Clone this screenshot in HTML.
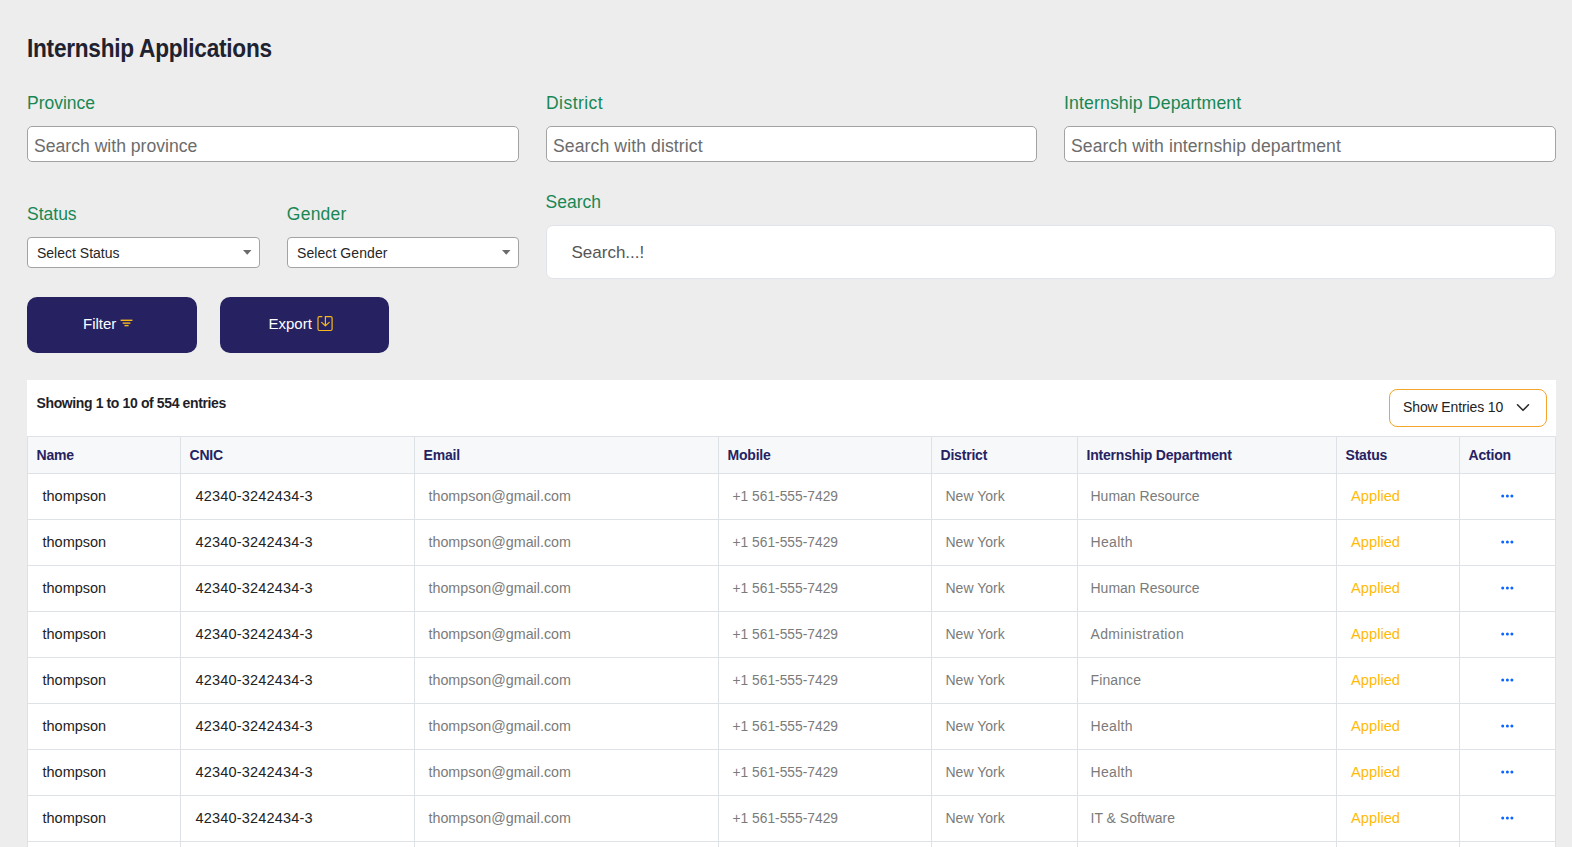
<!DOCTYPE html>
<html><head><meta charset="utf-8"><style>
html,body{margin:0;padding:0;}
body{width:1572px;height:847px;overflow:hidden;background:#ededed;position:relative;font-family:"Liberation Sans",sans-serif;}
.t{position:absolute;white-space:nowrap;line-height:1;}
.abs{position:absolute;box-sizing:border-box;}
.inp{position:absolute;box-sizing:border-box;background:#fff;border:1px solid #a3a3a3;border-radius:5px;}
.sel{position:absolute;box-sizing:border-box;background:#fff;border:1px solid #a3a3a3;border-radius:4px;}
.sbox{position:absolute;box-sizing:border-box;background:#fff;border:1px solid #e0e4ea;border-radius:7px;}
.btn{position:absolute;box-sizing:border-box;background:#262262;border-radius:10px;}
</style></head><body>
<div class="t" style="left:26.8px;top:35.29px;font-size:26px;color:#202230;font-weight:bold;letter-spacing:-0.3px;transform:scaleX(0.871);transform-origin:0 0;">Internship Applications</div>
<div class="t" style="left:27px;top:95.19px;font-size:17.5px;color:#198754;font-weight:normal;letter-spacing:0px;">Province</div>
<div class="t" style="left:546px;top:95.19px;font-size:17.5px;color:#198754;font-weight:normal;letter-spacing:0.45px;">District</div>
<div class="t" style="left:1064px;top:95.02px;font-size:17.7px;color:#198754;font-weight:normal;letter-spacing:0.11px;">Internship Department</div>
<div class="inp" style="left:27px;top:126px;width:492px;height:36px"></div>
<div class="t" style="left:34px;top:137.80px;font-size:17.6px;color:#6c6c6c;font-weight:normal;letter-spacing:0px;">Search with province</div>
<div class="inp" style="left:546px;top:126px;width:491px;height:36px"></div>
<div class="t" style="left:553px;top:137.80px;font-size:17.6px;color:#6c6c6c;font-weight:normal;letter-spacing:0.1px;">Search with district</div>
<div class="inp" style="left:1064px;top:126px;width:492px;height:36px"></div>
<div class="t" style="left:1071px;top:137.80px;font-size:17.6px;color:#6c6c6c;font-weight:normal;letter-spacing:0.09px;">Search with internship department</div>
<div class="t" style="left:27px;top:206.19px;font-size:17.5px;color:#198754;font-weight:normal;letter-spacing:0px;">Status</div>
<div class="t" style="left:286.8px;top:206.19px;font-size:17.5px;color:#198754;font-weight:normal;letter-spacing:0.25px;">Gender</div>
<div class="t" style="left:545.5px;top:194.19px;font-size:17.5px;color:#198754;font-weight:normal;letter-spacing:0px;">Search</div>
<div class="sel" style="left:27px;top:237px;width:233px;height:31px"></div>
<div class="t" style="left:37px;top:246.15px;font-size:14px;color:#262626;font-weight:normal;letter-spacing:0px;">Select Status</div>
<svg class="abs" style="left:243px;top:250px" width="9" height="5"><path d="M0 0H8.5L4.25 4.8Z" fill="#6b6b6b"/></svg>
<div class="sel" style="left:287px;top:237px;width:232px;height:31px"></div>
<div class="t" style="left:297px;top:246.15px;font-size:14px;color:#262626;font-weight:normal;letter-spacing:0.08px;">Select Gender</div>
<svg class="abs" style="left:502px;top:250px" width="9" height="5"><path d="M0 0H8.5L4.25 4.8Z" fill="#6b6b6b"/></svg>
<div class="sbox" style="left:546px;top:225px;width:1010px;height:54px"></div>
<div class="t" style="left:571.5px;top:243.61px;font-size:17px;color:#555;font-weight:normal;letter-spacing:0px;">Search...!</div>
<div class="btn" style="left:27px;top:297px;width:170px;height:56px"></div>
<div class="btn" style="left:220px;top:297px;width:169px;height:56px"></div>
<div class="t" style="left:83px;top:316.10px;font-size:15px;color:#fff;font-weight:normal;letter-spacing:0px;">Filter</div>
<svg class="abs" style="left:120px;top:318px" width="14" height="10"><g stroke="#f7b719" stroke-width="1.4"><path d="M0.6 2.3H12.4"/><path d="M2.7 5.1H10.4"/><path d="M4.5 7.6H8.6"/></g></svg>
<div class="t" style="left:268.5px;top:316.10px;font-size:15px;color:#fff;font-weight:normal;letter-spacing:0px;">Export</div>
<svg class="abs" style="left:316px;top:315px" width="18" height="18"><path d="M6.3 1.6H3.5Q2 1.6 2 3.1V14Q2 15.5 3.5 15.5H14.6Q16.1 15.5 16.1 14V3.1Q16.1 1.6 14.6 1.6H9.4V10.4" fill="none" stroke="#f7b719" stroke-width="1.2"/><path d="M5.6 7.4L9.4 10.8L13.2 7.4" fill="none" stroke="#f7b719" stroke-width="1.2" stroke-linecap="round" stroke-linejoin="round"/></svg>
<div class="abs" style="left:27px;top:380px;width:1529px;height:480px;background:#fff"></div>
<div class="t" style="left:36.5px;top:396.45px;font-size:14px;color:#1f1f29;font-weight:bold;letter-spacing:-0.38px;">Showing 1 to 10 of 554 entries</div>
<div class="abs" style="left:1389px;top:389px;width:158px;height:38px;border:1px solid #f4a52c;border-radius:8px"></div>
<div class="t" style="left:1403px;top:399.65px;font-size:14px;color:#222;font-weight:normal;letter-spacing:-0.12px;">Show Entries 10</div>
<svg class="abs" style="left:1515px;top:402px" width="16" height="11"><path d="M2.5 2.8L8 8.3L13.5 2.8" fill="none" stroke="#2a2a2a" stroke-width="1.6" stroke-linecap="round" stroke-linejoin="round"/></svg>
<div class="abs" style="left:27px;top:436px;width:1529px;height:37px;background:#f7f8fa"></div>
<div class="abs" style="left:27px;top:436px;width:1529px;height:1px;background:#dee2e6"></div>
<div class="abs" style="left:27px;top:473px;width:1529px;height:1px;background:#dee2e6"></div>
<div class="abs" style="left:27px;top:519px;width:1529px;height:1px;background:#dee2e6"></div>
<div class="abs" style="left:27px;top:565px;width:1529px;height:1px;background:#dee2e6"></div>
<div class="abs" style="left:27px;top:611px;width:1529px;height:1px;background:#dee2e6"></div>
<div class="abs" style="left:27px;top:657px;width:1529px;height:1px;background:#dee2e6"></div>
<div class="abs" style="left:27px;top:703px;width:1529px;height:1px;background:#dee2e6"></div>
<div class="abs" style="left:27px;top:749px;width:1529px;height:1px;background:#dee2e6"></div>
<div class="abs" style="left:27px;top:795px;width:1529px;height:1px;background:#dee2e6"></div>
<div class="abs" style="left:27px;top:841px;width:1529px;height:1px;background:#dee2e6"></div>
<div class="abs" style="left:27px;top:436px;width:1px;height:420px;background:#dee2e6"></div>
<div class="abs" style="left:180px;top:436px;width:1px;height:420px;background:#dee2e6"></div>
<div class="abs" style="left:414px;top:436px;width:1px;height:420px;background:#dee2e6"></div>
<div class="abs" style="left:718px;top:436px;width:1px;height:420px;background:#dee2e6"></div>
<div class="abs" style="left:931px;top:436px;width:1px;height:420px;background:#dee2e6"></div>
<div class="abs" style="left:1077px;top:436px;width:1px;height:420px;background:#dee2e6"></div>
<div class="abs" style="left:1336px;top:436px;width:1px;height:420px;background:#dee2e6"></div>
<div class="abs" style="left:1459px;top:436px;width:1px;height:420px;background:#dee2e6"></div>
<div class="abs" style="left:1555px;top:436px;width:1px;height:420px;background:#dee2e6"></div>
<div class="t" style="left:36.5px;top:448.15px;font-size:14px;color:#262262;font-weight:bold;letter-spacing:-0.2px;">Name</div>
<div class="t" style="left:189.5px;top:448.15px;font-size:14px;color:#262262;font-weight:bold;letter-spacing:-0.2px;">CNIC</div>
<div class="t" style="left:423.5px;top:448.15px;font-size:14px;color:#262262;font-weight:bold;letter-spacing:-0.2px;">Email</div>
<div class="t" style="left:727.5px;top:448.15px;font-size:14px;color:#262262;font-weight:bold;letter-spacing:-0.2px;">Mobile</div>
<div class="t" style="left:940.5px;top:448.15px;font-size:14px;color:#262262;font-weight:bold;letter-spacing:-0.2px;">District</div>
<div class="t" style="left:1086.5px;top:448.15px;font-size:14px;color:#262262;font-weight:bold;letter-spacing:-0.2px;">Internship Department</div>
<div class="t" style="left:1345.5px;top:448.15px;font-size:14px;color:#262262;font-weight:bold;letter-spacing:-0.2px;">Status</div>
<div class="t" style="left:1468.5px;top:448.15px;font-size:14px;color:#262262;font-weight:bold;letter-spacing:-0.2px;">Action</div>
<div class="t" style="left:42.5px;top:488.73px;font-size:14.5px;color:#222;font-weight:normal;letter-spacing:0px;">thompson</div>
<div class="t" style="left:195.5px;top:488.73px;font-size:14.5px;color:#222;font-weight:normal;letter-spacing:0.18px;">42340-3242434-3</div>
<div class="t" style="left:428.5px;top:488.90px;font-size:14.3px;color:#7b7b7b;font-weight:normal;letter-spacing:0px;">thompson@gmail.com</div>
<div class="t" style="left:732.5px;top:489.92px;font-size:13.8px;color:#7b7b7b;font-weight:normal;letter-spacing:0px;">+1 561-555-7429</div>
<div class="t" style="left:945.5px;top:489.15px;font-size:14px;color:#7b7b7b;font-weight:normal;letter-spacing:0px;">New York</div>
<div class="t" style="left:1090.5px;top:489.15px;font-size:14px;color:#7b7b7b;font-weight:normal;letter-spacing:0px;">Human Resource</div>
<div class="t" style="left:1351px;top:488.56px;font-size:14.7px;color:#ffba08;font-weight:normal;letter-spacing:0px;">Applied</div>
<svg class="abs" style="left:1500px;top:493px" width="15" height="6"><g fill="#0d64ff"><circle cx="2.7" cy="3" r="1.5"/><circle cx="7.4" cy="3" r="1.5"/><circle cx="11.9" cy="3" r="1.5"/></g></svg>
<div class="t" style="left:42.5px;top:534.73px;font-size:14.5px;color:#222;font-weight:normal;letter-spacing:0px;">thompson</div>
<div class="t" style="left:195.5px;top:534.73px;font-size:14.5px;color:#222;font-weight:normal;letter-spacing:0.18px;">42340-3242434-3</div>
<div class="t" style="left:428.5px;top:534.90px;font-size:14.3px;color:#7b7b7b;font-weight:normal;letter-spacing:0px;">thompson@gmail.com</div>
<div class="t" style="left:732.5px;top:535.92px;font-size:13.8px;color:#7b7b7b;font-weight:normal;letter-spacing:0px;">+1 561-555-7429</div>
<div class="t" style="left:945.5px;top:535.15px;font-size:14px;color:#7b7b7b;font-weight:normal;letter-spacing:0px;">New York</div>
<div class="t" style="left:1090.5px;top:535.15px;font-size:14px;color:#7b7b7b;font-weight:normal;letter-spacing:0.33px;">Health</div>
<div class="t" style="left:1351px;top:534.56px;font-size:14.7px;color:#ffba08;font-weight:normal;letter-spacing:0px;">Applied</div>
<svg class="abs" style="left:1500px;top:539px" width="15" height="6"><g fill="#0d64ff"><circle cx="2.7" cy="3" r="1.5"/><circle cx="7.4" cy="3" r="1.5"/><circle cx="11.9" cy="3" r="1.5"/></g></svg>
<div class="t" style="left:42.5px;top:580.73px;font-size:14.5px;color:#222;font-weight:normal;letter-spacing:0px;">thompson</div>
<div class="t" style="left:195.5px;top:580.73px;font-size:14.5px;color:#222;font-weight:normal;letter-spacing:0.18px;">42340-3242434-3</div>
<div class="t" style="left:428.5px;top:580.90px;font-size:14.3px;color:#7b7b7b;font-weight:normal;letter-spacing:0px;">thompson@gmail.com</div>
<div class="t" style="left:732.5px;top:581.92px;font-size:13.8px;color:#7b7b7b;font-weight:normal;letter-spacing:0px;">+1 561-555-7429</div>
<div class="t" style="left:945.5px;top:581.15px;font-size:14px;color:#7b7b7b;font-weight:normal;letter-spacing:0px;">New York</div>
<div class="t" style="left:1090.5px;top:581.15px;font-size:14px;color:#7b7b7b;font-weight:normal;letter-spacing:0px;">Human Resource</div>
<div class="t" style="left:1351px;top:580.56px;font-size:14.7px;color:#ffba08;font-weight:normal;letter-spacing:0px;">Applied</div>
<svg class="abs" style="left:1500px;top:585px" width="15" height="6"><g fill="#0d64ff"><circle cx="2.7" cy="3" r="1.5"/><circle cx="7.4" cy="3" r="1.5"/><circle cx="11.9" cy="3" r="1.5"/></g></svg>
<div class="t" style="left:42.5px;top:626.73px;font-size:14.5px;color:#222;font-weight:normal;letter-spacing:0px;">thompson</div>
<div class="t" style="left:195.5px;top:626.73px;font-size:14.5px;color:#222;font-weight:normal;letter-spacing:0.18px;">42340-3242434-3</div>
<div class="t" style="left:428.5px;top:626.90px;font-size:14.3px;color:#7b7b7b;font-weight:normal;letter-spacing:0px;">thompson@gmail.com</div>
<div class="t" style="left:732.5px;top:627.92px;font-size:13.8px;color:#7b7b7b;font-weight:normal;letter-spacing:0px;">+1 561-555-7429</div>
<div class="t" style="left:945.5px;top:627.15px;font-size:14px;color:#7b7b7b;font-weight:normal;letter-spacing:0px;">New York</div>
<div class="t" style="left:1090.5px;top:627.15px;font-size:14px;color:#7b7b7b;font-weight:normal;letter-spacing:0.35px;">Administration</div>
<div class="t" style="left:1351px;top:626.56px;font-size:14.7px;color:#ffba08;font-weight:normal;letter-spacing:0px;">Applied</div>
<svg class="abs" style="left:1500px;top:631px" width="15" height="6"><g fill="#0d64ff"><circle cx="2.7" cy="3" r="1.5"/><circle cx="7.4" cy="3" r="1.5"/><circle cx="11.9" cy="3" r="1.5"/></g></svg>
<div class="t" style="left:42.5px;top:672.73px;font-size:14.5px;color:#222;font-weight:normal;letter-spacing:0px;">thompson</div>
<div class="t" style="left:195.5px;top:672.73px;font-size:14.5px;color:#222;font-weight:normal;letter-spacing:0.18px;">42340-3242434-3</div>
<div class="t" style="left:428.5px;top:672.90px;font-size:14.3px;color:#7b7b7b;font-weight:normal;letter-spacing:0px;">thompson@gmail.com</div>
<div class="t" style="left:732.5px;top:673.92px;font-size:13.8px;color:#7b7b7b;font-weight:normal;letter-spacing:0px;">+1 561-555-7429</div>
<div class="t" style="left:945.5px;top:673.15px;font-size:14px;color:#7b7b7b;font-weight:normal;letter-spacing:0px;">New York</div>
<div class="t" style="left:1090.5px;top:673.15px;font-size:14px;color:#7b7b7b;font-weight:normal;letter-spacing:0.12px;">Finance</div>
<div class="t" style="left:1351px;top:672.56px;font-size:14.7px;color:#ffba08;font-weight:normal;letter-spacing:0px;">Applied</div>
<svg class="abs" style="left:1500px;top:677px" width="15" height="6"><g fill="#0d64ff"><circle cx="2.7" cy="3" r="1.5"/><circle cx="7.4" cy="3" r="1.5"/><circle cx="11.9" cy="3" r="1.5"/></g></svg>
<div class="t" style="left:42.5px;top:718.73px;font-size:14.5px;color:#222;font-weight:normal;letter-spacing:0px;">thompson</div>
<div class="t" style="left:195.5px;top:718.73px;font-size:14.5px;color:#222;font-weight:normal;letter-spacing:0.18px;">42340-3242434-3</div>
<div class="t" style="left:428.5px;top:718.90px;font-size:14.3px;color:#7b7b7b;font-weight:normal;letter-spacing:0px;">thompson@gmail.com</div>
<div class="t" style="left:732.5px;top:719.92px;font-size:13.8px;color:#7b7b7b;font-weight:normal;letter-spacing:0px;">+1 561-555-7429</div>
<div class="t" style="left:945.5px;top:719.15px;font-size:14px;color:#7b7b7b;font-weight:normal;letter-spacing:0px;">New York</div>
<div class="t" style="left:1090.5px;top:719.15px;font-size:14px;color:#7b7b7b;font-weight:normal;letter-spacing:0.33px;">Health</div>
<div class="t" style="left:1351px;top:718.56px;font-size:14.7px;color:#ffba08;font-weight:normal;letter-spacing:0px;">Applied</div>
<svg class="abs" style="left:1500px;top:723px" width="15" height="6"><g fill="#0d64ff"><circle cx="2.7" cy="3" r="1.5"/><circle cx="7.4" cy="3" r="1.5"/><circle cx="11.9" cy="3" r="1.5"/></g></svg>
<div class="t" style="left:42.5px;top:764.73px;font-size:14.5px;color:#222;font-weight:normal;letter-spacing:0px;">thompson</div>
<div class="t" style="left:195.5px;top:764.73px;font-size:14.5px;color:#222;font-weight:normal;letter-spacing:0.18px;">42340-3242434-3</div>
<div class="t" style="left:428.5px;top:764.90px;font-size:14.3px;color:#7b7b7b;font-weight:normal;letter-spacing:0px;">thompson@gmail.com</div>
<div class="t" style="left:732.5px;top:765.92px;font-size:13.8px;color:#7b7b7b;font-weight:normal;letter-spacing:0px;">+1 561-555-7429</div>
<div class="t" style="left:945.5px;top:765.15px;font-size:14px;color:#7b7b7b;font-weight:normal;letter-spacing:0px;">New York</div>
<div class="t" style="left:1090.5px;top:765.15px;font-size:14px;color:#7b7b7b;font-weight:normal;letter-spacing:0.33px;">Health</div>
<div class="t" style="left:1351px;top:764.56px;font-size:14.7px;color:#ffba08;font-weight:normal;letter-spacing:0px;">Applied</div>
<svg class="abs" style="left:1500px;top:769px" width="15" height="6"><g fill="#0d64ff"><circle cx="2.7" cy="3" r="1.5"/><circle cx="7.4" cy="3" r="1.5"/><circle cx="11.9" cy="3" r="1.5"/></g></svg>
<div class="t" style="left:42.5px;top:810.73px;font-size:14.5px;color:#222;font-weight:normal;letter-spacing:0px;">thompson</div>
<div class="t" style="left:195.5px;top:810.73px;font-size:14.5px;color:#222;font-weight:normal;letter-spacing:0.18px;">42340-3242434-3</div>
<div class="t" style="left:428.5px;top:810.90px;font-size:14.3px;color:#7b7b7b;font-weight:normal;letter-spacing:0px;">thompson@gmail.com</div>
<div class="t" style="left:732.5px;top:811.92px;font-size:13.8px;color:#7b7b7b;font-weight:normal;letter-spacing:0px;">+1 561-555-7429</div>
<div class="t" style="left:945.5px;top:811.15px;font-size:14px;color:#7b7b7b;font-weight:normal;letter-spacing:0px;">New York</div>
<div class="t" style="left:1090.5px;top:811.15px;font-size:14px;color:#7b7b7b;font-weight:normal;letter-spacing:0px;">IT &amp; Software</div>
<div class="t" style="left:1351px;top:810.56px;font-size:14.7px;color:#ffba08;font-weight:normal;letter-spacing:0px;">Applied</div>
<svg class="abs" style="left:1500px;top:815px" width="15" height="6"><g fill="#0d64ff"><circle cx="2.7" cy="3" r="1.5"/><circle cx="7.4" cy="3" r="1.5"/><circle cx="11.9" cy="3" r="1.5"/></g></svg>
<div class="t" style="left:42.5px;top:856.73px;font-size:14.5px;color:#222;font-weight:normal;letter-spacing:0px;">thompson</div>
<div class="t" style="left:195.5px;top:856.73px;font-size:14.5px;color:#222;font-weight:normal;letter-spacing:0.18px;">42340-3242434-3</div>
<div class="t" style="left:428.5px;top:856.90px;font-size:14.3px;color:#7b7b7b;font-weight:normal;letter-spacing:0px;">thompson@gmail.com</div>
<div class="t" style="left:732.5px;top:857.92px;font-size:13.8px;color:#7b7b7b;font-weight:normal;letter-spacing:0px;">+1 561-555-7429</div>
<div class="t" style="left:945.5px;top:857.15px;font-size:14px;color:#7b7b7b;font-weight:normal;letter-spacing:0px;">New York</div>
<div class="t" style="left:1090.5px;top:857.15px;font-size:14px;color:#7b7b7b;font-weight:normal;letter-spacing:0.12px;">Finance</div>
<div class="t" style="left:1351px;top:856.56px;font-size:14.7px;color:#ffba08;font-weight:normal;letter-spacing:0px;">Applied</div>
<svg class="abs" style="left:1500px;top:861px" width="15" height="6"><g fill="#0d64ff"><circle cx="2.7" cy="3" r="1.5"/><circle cx="7.4" cy="3" r="1.5"/><circle cx="11.9" cy="3" r="1.5"/></g></svg>
</body></html>
